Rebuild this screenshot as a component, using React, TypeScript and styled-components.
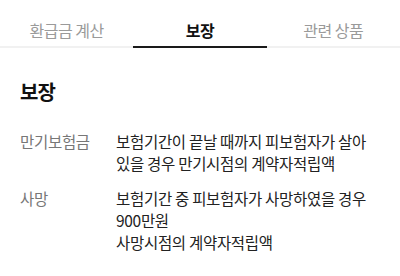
import React from 'react';
import styled, { createGlobalStyle } from 'styled-components';

const GlobalStyle = createGlobalStyle`
	html, body {
		margin: 0;
		padding: 0;
		background: #fff;
	}
	body {
		font-family: 'Noto Sans CJK KR', 'Noto Sans', sans-serif;
		color: #222;
	}
`;

const Page = styled.div`
	width: 400px;
	height: 276px;
	background: #fff;
	overflow: hidden;
`;

const TabBar = styled.nav`
	display: grid;
	grid-template-columns: repeat(3, 1fr);
	border-bottom: 2px solid #f1f1f1;
`;

const Tab = styled.div<{ active?: boolean }>`
	box-sizing: border-box;
	height: 48px;
	padding-top: 19px;
	line-height: 23px;
	text-align: center;
	font-size: 16px;
	letter-spacing: -0.5px;
	font-weight: ${(p) => (p.active ? 700 : 400)};
	color: ${(p) => (p.active ? '#111' : '#9a9a9a')};
	border-bottom: 2px solid ${(p) => (p.active ? '#1a1a1a' : 'transparent')};
	margin-bottom: -2px;
`;

const Section = styled.section`
	padding: 31px 20px 0;
`;

const Title = styled.h2`
	margin: 0 0 25px;
	font-size: 20px;
	line-height: 26px;
	font-weight: 700;
	letter-spacing: -1px;
	color: #111;
`;

const Rows = styled.dl`
	margin: 0;
	display: flex;
	flex-direction: column;
	gap: 13px;
`;

const Row = styled.div`
	display: grid;
	grid-template-columns: 96px 1fr;
`;

const Label = styled.dt`
	margin: 0;
	font-size: 15.5px;
	line-height: 22px;
	letter-spacing: -0.3px;
	color: #777;
`;

const Value = styled.dd`
	margin: 0;
	font-size: 15.5px;
	line-height: 22px;
	letter-spacing: -0.3px;
	color: #222;
`;

const tabs = ['환급금 계산', '보장', '관련 상품'];

const coverage = [
	{ label: '만기보험금', lines: ['보험기간이 끝날 때까지 피보험자가 살아', '있을 경우 만기시점의 계약자적립액'] },
	{ label: '사망', lines: ['보험기간 중 피보험자가 사망하였을 경우', '900만원', '사망시점의 계약자적립액'] },
];

export default function App() {
	return (
		<Page>
			<GlobalStyle />
			<TabBar>
				{tabs.map((t) => (
					<Tab key={t} active={t === '보장'}>
						{t}
					</Tab>
				))}
			</TabBar>
			<Section>
				<Title>보장</Title>
				<Rows>
					{coverage.map((c) => (
						<Row key={c.label}>
							<Label>{c.label}</Label>
							<Value>
								{c.lines.map((l, i) => (
									<div key={i}>{l}</div>
								))}
							</Value>
						</Row>
					))}
				</Rows>
			</Section>
		</Page>
	);
}
